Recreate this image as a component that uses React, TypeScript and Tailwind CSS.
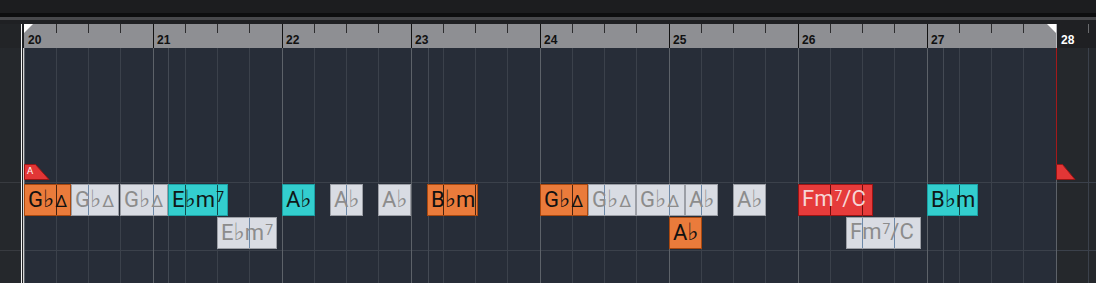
import React from "react";

type Kind = "orange" | "gray" | "teal" | "red";
type Seg = { t: string; k?: "flat" | "tri" | "sup" };
type Chord = { x: number; row: 0 | 1; w: number; kind: Kind; label: Seg[] };

const BAR = 129;
const BEAT = 32.25;

// grid x positions, relative to the arrange canvas (page x - 24)
const beats: { x: number; bar: boolean; n: number }[] = [];
for (let b = 0; b <= 8; b++) {
  for (let j = 0; j < 4; j++) {
    const x = Math.floor(b * BAR + j * BEAT);
    if (x > 1072) continue;
    beats.push({ x, bar: j === 0, n: 20 + b });
  }
}
const extraLines = [144, 404, 919];

const GbMaj: Seg[] = [{ t: "G" }, { t: "♭", k: "flat" }, { t: "Δ", k: "tri" }];
const Ebm7: Seg[] = [{ t: "E" }, { t: "♭", k: "flat" }, { t: "m" }, { t: "7", k: "sup" }];
const Ab: Seg[] = [{ t: "A" }, { t: "♭", k: "flat" }];
const Bbm: Seg[] = [{ t: "B" }, { t: "♭", k: "flat" }, { t: "m" }];
const Fm7C: Seg[] = [{ t: "Fm" }, { t: "7", k: "sup" }, { t: "/C" }];

const chords: Chord[] = [
  { x: 0, row: 0, w: 47, kind: "orange", label: GbMaj },
  { x: 47, row: 0, w: 48, kind: "gray", label: GbMaj },
  { x: 96, row: 0, w: 48, kind: "gray", label: GbMaj },
  { x: 144, row: 0, w: 60, kind: "teal", label: Ebm7 },
  { x: 193, row: 1, w: 60, kind: "gray", label: Ebm7 },
  { x: 258, row: 0, w: 33, kind: "teal", label: Ab },
  { x: 306, row: 0, w: 33, kind: "gray", label: Ab },
  { x: 354, row: 0, w: 33, kind: "gray", label: Ab },
  { x: 403, row: 0, w: 51, kind: "orange", label: Bbm },
  { x: 516, row: 0, w: 48, kind: "orange", label: GbMaj },
  { x: 564, row: 0, w: 48, kind: "gray", label: GbMaj },
  { x: 612, row: 0, w: 49, kind: "gray", label: GbMaj },
  { x: 661, row: 0, w: 33, kind: "gray", label: Ab },
  { x: 645, row: 1, w: 33, kind: "orange", label: Ab },
  { x: 709, row: 0, w: 33, kind: "gray", label: Ab },
  { x: 774, row: 0, w: 75, kind: "red", label: Fm7C },
  { x: 822, row: 1, w: 75, kind: "gray", label: Fm7C },
  { x: 903, row: 0, w: 51, kind: "teal", label: Bbm },
];

const styles: Record<Kind, { box: string; text: string; line: string }> = {
  orange: { box: "bg-[#ea7b3b] border-[#a9480f]", text: "text-[#111111]", line: "bg-[#4a2410]" },
  gray: { box: "bg-[#d9dce3] border-[#9c9fa6]", text: "text-[#8c8c8c]", line: "bg-[#6d89a8]" },
  teal: { box: "bg-[#33cece] border-[#1b9fa3]", text: "text-[#101818]", line: "bg-[#124b4d]" },
  red: { box: "bg-[#e63b3b] border-[#9d1313]", text: "text-[#f6d6d6]", line: "bg-[#6d1010]" },
};

function Label({ segs }: { segs: Seg[] }) {
  return (
    <span className="flex items-baseline whitespace-nowrap leading-[22px]">
      {segs.map((s, i) => {
        if (s.k === "flat")
          return (
            <span key={i} className="text-[24px] font-['DejaVu_Sans',sans-serif]">
              {s.t}
            </span>
          );
        if (s.k === "tri")
          return (
            <span key={i} className="text-[17px] ml-[1px]">
              {s.t}
            </span>
          );
        if (s.k === "sup")
          return (
            <span key={i} className="relative top-[-5px] text-[14px] ml-[1px]">
              {s.t}
            </span>
          );
        return (
          <span key={i} className="text-[22px]">
            {s.t}
          </span>
        );
      })}
    </span>
  );
}

function ChordBlock({ c }: { c: Chord }) {
  const st = styles[c.kind];
  const inner = beats.filter((b) => b.x > c.x + 1 && b.x < c.x + c.w - 1);
  return (
    <div
      className={`absolute h-[32px] border ${st.box} overflow-hidden`}
      style={{ left: c.x, top: c.row === 0 ? 136 : 169, width: c.w }}
    >
      {inner.map((b) => (
        <div key={b.x} className={`absolute top-0 bottom-0 w-[1px] ${st.line}`} style={{ left: b.x - c.x - 1 }} />
      ))}
      <div className={`relative pl-[3px] pt-[3px] ${st.text} font-['Roboto','DejaVu_Sans',sans-serif]`}>
        <Label segs={c.label} />
      </div>
    </div>
  );
}

function Ruler() {
  return (
    <div className="relative h-[24px] flex">
      <div className="w-[1032px] bg-[#8e8f93]" />
      <div className="flex-1 bg-[#1f2023] border-l border-[#b8b9bc]" />
      {beats.map((b) =>
        b.bar ? (
          b.x > 0 && b.x < 1032 && <div key={b.x} className="absolute top-0 bottom-0 w-[1px] bg-[#121212]" style={{ left: b.x }} />
        ) : (
          <div
            key={b.x}
            className={`absolute top-0 h-[9px] w-[1px] ${b.x > 1032 ? "bg-[#6a6b6e]" : "bg-[#2c2c2e]"}`}
            style={{ left: b.x }}
          />
        )
      )}
      {beats
        .filter((b) => b.bar)
        .map((b) => (
          <span
            key={"n" + b.n}
            className={`absolute top-[10px] text-[12px] leading-[12px] font-bold font-['Liberation_Sans',sans-serif] ${
              b.n === 28 ? "text-white" : "text-[#111111]"
            }`}
            style={{ left: b.x + (b.n === 28 ? 5 : 4) }}
          >
            {b.n}
          </span>
        ))}
      <svg className="absolute left-0 top-0" width="9" height="9" viewBox="0 0 9 9">
        <polygon points="0,0 9,0 0,9" fill="#ffffff" />
      </svg>
      <svg className="absolute left-[1023px] top-0" width="9" height="9" viewBox="0 0 9 9">
        <polygon points="0,0 9,0 9,9" fill="#ffffff" />
      </svg>
    </div>
  );
}

function Grid() {
  return (
    <div className="relative flex-1 flex overflow-hidden">
      <div className="w-[1032px] bg-[#272d38]" />
      <div className="flex-1 bg-[#25282c]" />
      {/* horizontal rows */}
      <div className="absolute left-0 right-0 top-[134px] h-[1px] bg-[#3b414b]" />
      <div className="absolute left-0 right-0 top-[202px] h-[1px] bg-[#3b414b]" />
      {beats.map((b) => (
        <div
          key={b.x}
          className={`absolute top-0 bottom-0 w-[1px] ${b.bar ? "bg-[#5d6269]" : "bg-[#3b414b]"}`}
          style={{ left: b.x }}
        />
      ))}
      {extraLines.map((x) => (
        <div key={x} className="absolute top-0 bottom-0 w-[1px] bg-[#444a54]" style={{ left: x }} />
      ))}
      {/* right locator line */}
      <div className="absolute left-[1032px] top-0 h-[116px] w-[1px] bg-[#a3191b]" />
      {/* cycle markers */}
      <svg className="absolute left-0 top-[116px]" width="26" height="16" viewBox="0 0 26 16">
        <polygon points="0.5,0.5 11.5,0.5 25,15.5 0.5,15.5" fill="#e23636" stroke="#9a1515" strokeWidth="1" />
      </svg>
      <span className="absolute left-[3px] top-[119px] text-[9px] leading-[9px] text-white font-['DejaVu_Sans',sans-serif]">
        A
      </span>
      <svg className="absolute left-[1032px] top-[116px]" width="20" height="16" viewBox="0 0 20 16">
        <polygon points="0.5,0.5 6.5,0.5 19,15.5 0.5,15.5" fill="#e23636" stroke="#9a1515" strokeWidth="1" />
      </svg>
      {chords.map((c, i) => (
        <ChordBlock key={i} c={c} />
      ))}
    </div>
  );
}

export default function App() {
  return (
    <div className="w-[1096px] h-[283px] flex flex-col bg-[#1c1d1f] overflow-hidden">
      <div className="h-[13px] bg-[#1c1d1f]" />
      <div className="h-[4px] bg-[#0d0e0f]" />
      <div className="h-[3px] bg-[#48494c]" />
      <div className="h-[4px] bg-[#1f2023]" />
      <div className="flex-1 flex">
        {/* track header edge */}
        <div className="w-[21px] flex flex-col">
          <div className="h-[24px] bg-[#222427]" />
          <div className="relative flex-1 bg-[#25282c]">
            <div className="absolute left-0 right-0 top-[134px] h-[1px] bg-[#383b40]" />
            <div className="absolute left-0 right-0 top-[202px] h-[1px] bg-[#383b40]" />
          </div>
        </div>
        <div className="w-[1px] bg-[#f2f2f2]" />
        <div className="w-[1px] bg-[#1f2023]" />
        <div className="w-[1px] flex flex-col">
          <div className="h-[24px] bg-[#1f2023]" />
          <div className="flex-1 bg-[#d4d4d4]" />
        </div>
        {/* arrange canvas */}
        <div className="w-[1072px] flex flex-col">
          <Ruler />
          <Grid />
        </div>
      </div>
    </div>
  );
}
